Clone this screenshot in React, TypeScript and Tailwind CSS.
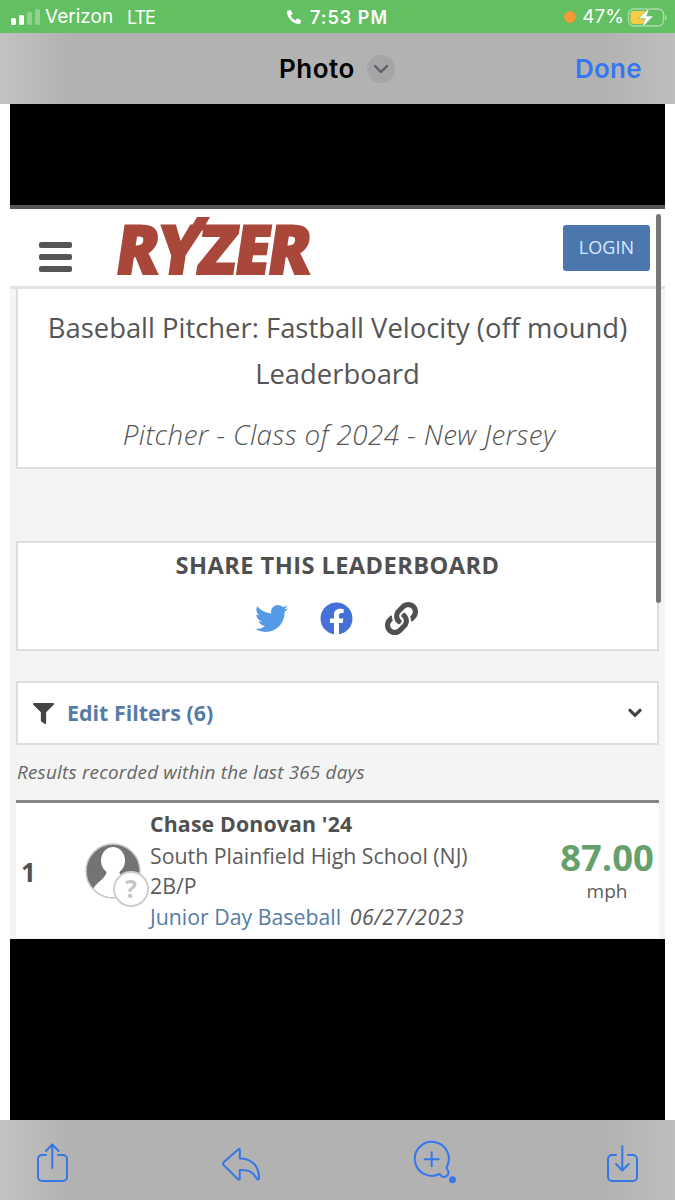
import { FaTwitter, FaFacebook, FaLink, FaFilter, FaPhoneAlt } from "react-icons/fa";

function StatusBar() {
  return (
    <div className="flex h-[33px] items-center bg-[#62bf62] pl-[11px] pr-[8px] pt-px font-['Inter',sans-serif] text-[19px] text-white">
      <div className="flex w-[280px] items-center">
        <div className="flex h-[17px] items-end gap-[3px] pb-px">
          <span className="h-[7px] w-[5px] rounded-[1.5px] bg-white" />
          <span className="h-[10px] w-[5px] rounded-[1.5px] bg-white" />
          <span className="h-[13px] w-[5px] rounded-[1.5px] bg-white/30" />
          <span className="h-[16px] w-[5px] rounded-[1.5px] bg-white/30" />
        </div>
        <span className="ml-[5px] w-[82px] tracking-[0px]">Verizon</span>
        <span className="text-[18px] tracking-[-1px]">LTE</span>
      </div>
      <FaPhoneAlt className="ml-[-4px] size-[14px]" />
      <span className="ml-[9px] font-semibold text-[18px] tracking-[1px]">7:53 PM</span>
      <div className="ml-auto flex items-center">
        <span className="size-[12px] rounded-full bg-[#f39a38]" />
        <span className="ml-[6px] text-[19px]">47%</span>
        <svg className="ml-[3px]" width="40" height="21" viewBox="0 0 39 21" fill="none">
          <rect x="1" y="2" width="35" height="17" rx="5" stroke="#fff" strokeOpacity=".45" strokeWidth="1.4" />
          <path d="M6 4h12v13H6a3 3 0 0 1-3-3V7a3 3 0 0 1 3-3z" fill="#f7cd45" />
          <path d="M37.5 7.5c2 1 2 5 0 6z" fill="#fff" fillOpacity=".5" />
          <path d="M22 .5 11 11.500h6.500L14.500 20.500 26 9h-6.700z" fill="#fff" stroke="#62bf62" strokeWidth=".6" />
        </svg>
      </div>
    </div>
  );
}

function PhotoHeader() {
  return (
    <div className="flex h-[71px] items-center bg-[linear-gradient(to_right,#c2c2c2,#b2b2b2_70px,#b2b2b2_605px,#bebebe)] pl-[279px] pr-[33px] font-['Inter',sans-serif] text-[26px] font-semibold">
      <span className="tracking-[0.5px] text-black">Photo</span>
      <span className="ml-[12px] flex size-[28px] items-center justify-center rounded-full bg-[#a5a5a7]">
        <svg width="16" height="10" viewBox="0 0 16 10" fill="none" stroke="#606064" strokeWidth="2.4" strokeLinecap="round" strokeLinejoin="round">
          <path d="m2 2 6 6 6-6" />
        </svg>
      </span>
      <span className="ml-auto tracking-[0.3px] text-[#3577f0]">Done</span>
    </div>
  );
}

function SiteHeader() {
  return (
    <div className="flex h-[80px] items-start border-b-[3px] border-[#e2e2e2] bg-white pl-[29px] pr-[15px]">
      <div className="mt-[33px] flex w-[33px] flex-col gap-[6px]">
        <span className="h-[6px] rounded-[2px] bg-[#555]" />
        <span className="h-[6px] rounded-[2px] bg-[#555]" />
        <span className="h-[6px] rounded-[2px] bg-[#555]" />
      </div>
      <div className="relative ml-[40px] mt-[4px] h-[70px] w-[200px]">
        <span className="inline-block origin-bottom-left scale-x-[0.94] -skew-x-9 text-[68px] font-extrabold leading-[70px] tracking-[-2.2px] text-[#a9473a] [-webkit-text-stroke:2px_#a9473a]">
          RYZER
        </span>
        {/* raised arm of the Y */}
        <span className="absolute left-[81px] top-[4px] h-[14px] w-[13px] -skew-x-30 bg-[#a9473a]" />
      </div>
      <button className="ml-auto mt-[16px] h-[46px] w-[87px] rounded-[3px] bg-[#4b77ae] pb-[2px] text-[18px] tracking-[0.1px] text-[#d9e9fb]">
        LOGIN
      </button>
    </div>
  );
}

function TitleCard() {
  return (
    <div className="mx-[6px] h-[180px] border-2 border-t-0 border-[#dedede] bg-white pt-[16px] text-center text-[#555]">
      <h1 className="whitespace-nowrap text-[27.4px] leading-[46px]">
        Baseball Pitcher: Fastball Velocity (off mound)
        <br />
        Leaderboard
      </h1>
      <h2 className="mt-[14px] whitespace-nowrap pl-[3px] text-[27.8px] font-light italic leading-[46px] tracking-[0.4px]">
        Pitcher - Class of 2024 - New Jersey
      </h2>
    </div>
  );
}

function ShareCard() {
  return (
    <div className="mx-[6px] mt-[72px] h-[110px] border-2 border-[#dedede] bg-white text-center">
      <h3 className="mt-[6px] text-[23.6px] font-bold leading-[32px] tracking-[0.45px] text-[#505050]">
        SHARE THIS LEADERBOARD
      </h3>
      <div className="mt-[21px] flex justify-center gap-[32px] pr-[2px]">
        <FaTwitter className="size-[33px] text-[#559ae6]" />
        <FaFacebook className="size-[33px] text-[#4470d8]" />
        <FaLink className="size-[33px] text-[#505050]" />
      </div>
    </div>
  );
}

function FilterBar() {
  return (
    <div className="mx-[6px] mt-[30px] flex h-[64px] items-center border-2 border-[#dedede] bg-white pl-[15px] pr-[15px]">
      <FaFilter className="size-[21px] text-[#444]" />
      <span className="ml-[13px] text-[21.4px] font-bold text-[#557ca6]">Edit Filters (6)</span>
      <svg className="ml-auto" width="14" height="10" viewBox="0 0 14 10" fill="none" stroke="#444" strokeWidth="3.2" strokeLinecap="round">
        <path d="m2 2.300 5 5 5-5" />
      </svg>
    </div>
  );
}

function Avatar() {
  return (
    <svg className="-ml-px mr-px mt-[39px] shrink-0" width="66" height="66" viewBox="0 0 66 66">
      <defs>
        <clipPath id="face">
          <circle cx="29" cy="29" r="26.5" />
        </clipPath>
      </defs>
      <circle cx="29" cy="29" r="27" fill="#737373" />
      <g clipPath="url(#face)" fill="#fff">
        <ellipse cx="29" cy="18.500" rx="12" ry="13.500" />
        <path d="M23 27h12c0 6 3 8 8 11l12 10v12H3L9 47c4-8 14-10 14-20z" />
      </g>
      <circle cx="29" cy="29" r="27" fill="none" stroke="#c9c9c9" strokeWidth="1.5" />
      <circle cx="47" cy="47" r="17" fill="#fff" stroke="#cfcfcf" strokeWidth="2" />
      <text x="47" y="55.500" textAnchor="middle" fontSize="25" fontWeight="700" fill="#c6c6c6" fontFamily="Open Sans">
        ?
      </text>
    </svg>
  );
}

function ResultRow() {
  return (
    <div className="mx-[6px] flex h-[138px] overflow-hidden border-t-[3px] border-[#858585] bg-white text-[21.3px] text-[#5c5c5c]">
      <div className="w-[69px] pl-[5px] pt-[51px] text-[26px] font-bold leading-[36px] text-[#505050]">1</div>
      <Avatar />
      <div className="-ml-[1px] grow whitespace-nowrap pt-[5px] leading-[31px]">
        <div className="font-bold tracking-[0.15px] text-[#505050]">Chase Donovan '24</div>
        <div className="pt-px">South Plainfield High School (NJ)</div>
        <div className="leading-[30px]">2B/P</div>
        <div>
          <span className="text-[#557ca6]">Junior Day Baseball</span>{" "}
          <span className="ml-[3px] italic tracking-[0.6px]">06/27/2023</span>
        </div>
      </div>
      <div className="w-[104px] pt-[33px] text-center">
        <div className="text-[36.4px] font-bold leading-[42px] text-[#65a06d]">87.00</div>
        <div className="pt-px text-[19px] leading-[24px]">mph</div>
      </div>
    </div>
  );
}

function PhotoToolbar() {
  return (
    <div className="flex h-[80px] items-start bg-[linear-gradient(to_right,#c2c2c2,#b2b2b2_70px,#b2b2b2_605px,#bebebe)] pl-[36px] pt-[20px]">
      <svg width="32" height="44" viewBox="0 0 32 44" fill="none" stroke="#3577e4" strokeWidth="2" strokeLinecap="round" strokeLinejoin="round">
        <path d="M10 15H6a4 4 0 0 0-4 4v18a4 4 0 0 0 4 4h21a4 4 0 0 0 4-4V19a4 4 0 0 0-4-4h-5M16.300 28V4.500M10 11l6.300-6.500L22.600 11" />
      </svg>
      <svg className="ml-[153px]" width="40" height="44" viewBox="0 0 40 44" fill="none" stroke="#3577e4" strokeWidth="2" strokeLinejoin="round">
        <path d="M17.500 9.200 2.700 22.200a1.900 1.900 0 0 0 0 2.900L17 39.200c.8.800 1.800.3 1.800-.8v-8.400c8-.5 13 1.500 17 8.800.7 1.200 2.200.8 2.200-.6C38 26 31 18.500 18.800 18.500v-8.700c0-1-.6-1.300-1.300-.6z" />
      </svg>
      <svg className="ml-[152px]" width="44" height="44" viewBox="0 0 44 44" fill="none" stroke="#3577f0" strokeWidth="2" strokeLinecap="round" strokeLinejoin="round">
        <path d="M26.500 34A17 17 0 1 1 34 26.500c-.8 1.200-.5 2 .5 3.300 1.400 2 1 4.500-.6 6-2 1.900-4.700 1.300-6-.3-.5-.8-.8-1.500-1.400-1.500M18.700 12.200v14M11.700 19.200h14" />
        <circle cx="39.500" cy="39.700" r="3.500" fill="#3577f0" stroke="none" />
      </svg>
      <svg className="ml-[148px]" width="34" height="44" viewBox="0 0 34 44" fill="none" stroke="#3577e4" strokeWidth="2" strokeLinecap="round" strokeLinejoin="round">
        <path d="M11 15H7a4 4 0 0 0-4 4v18a4 4 0 0 0 4 4h21a4 4 0 0 0 4-4V19a4 4 0 0 0-4-4h-5M17.300 6v24M11 24l6.300 6.500 6.300-6.500" />
      </svg>
    </div>
  );
}

export default function App() {
  return (
    <main className="flex h-[1200px] w-[675px] flex-col overflow-hidden bg-white">
      <StatusBar />
      <PhotoHeader />
      <div className="mx-[10px] h-[1016px] bg-black pt-[101px]">
        <div className="relative h-[734px] border-t-4 border-[#555] bg-[#f4f4f4] font-['Open_Sans',sans-serif]">
          <SiteHeader />
          <TitleCard />
          <ShareCard />
          <FilterBar />
          <p className="ml-[7px] mt-[12px] h-[43px] whitespace-nowrap text-[18.9px] italic leading-[30px] tracking-[0.2px] text-[#666]">
            Results recorded within the last 365 days
          </p>
          <ResultRow />
          {/* scrollbar thumb */}
          <div className="absolute right-[4px] top-[5px] h-[389px] w-[5px] rounded-full bg-[#777]" />
        </div>
      </div>
      <PhotoToolbar />
    </main>
  );
}
